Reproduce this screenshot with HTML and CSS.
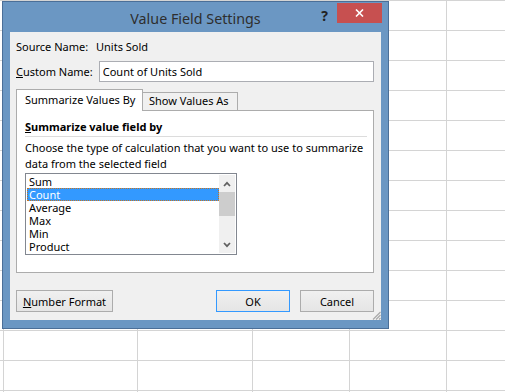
FILE: index.html
```html
<!DOCTYPE html>
<html lang="en">
<head>
    <meta charset="UTF-8">
    <title>Value Field Settings</title>
    <link rel="stylesheet" href="styles.css">
</head>
<body>
    <!-- worksheet behind the dialog -->
    <div class="sheet">
        <div class="col col-a"></div>
        <div class="col col-b"></div>
        <div class="col col-c"></div>
        <div class="col col-d"></div>
        <div class="col col-e"></div>
        <div class="col col-f"></div>
    </div>

    <div class="dialog">
        <div class="titlebar">
            <span class="title">Value Field Settings</span>
            <span class="help">?</span>
            <span class="close">
                <svg width="9" height="8" viewBox="0 0 9 8"><path d="M1 0.5 L8 7.5 M8 0.5 L1 7.5" stroke="#fff" stroke-width="1.6"/></svg>
            </span>
        </div>

        <div class="client">
            <div class="field-row">
                <span class="label source-label">Source Name:</span>
                <span>Units Sold</span>
            </div>
            <div class="field-row custom-row">
                <label class="label custom-label" for="custom-name"><u>C</u>ustom Name:</label>
                <input type="text" id="custom-name" class="text-input" value="Count of Units Sold">
            </div>

            <div class="tabs">
                <div class="tab active">Summarize Values By</div>
                <div class="tab">Show Values As</div>
            </div>
            <div class="panel">
                <div class="group-title"><u>S</u>ummarize value field by</div>
                <div class="rule"></div>
                <p class="desc">Choose the type of calculation that you want to use to summarize<br>data from the selected field</p>
                <div class="listbox">
                    <ul class="items">
                        <li>Sum</li>
                        <li class="selected">Count</li>
                        <li>Average</li>
                        <li>Max</li>
                        <li>Min</li>
                        <li>Product</li>
                    </ul>
                    <div class="scrollbar">
                        <div class="arrow">
                            <svg width="8" height="6" viewBox="0 0 8 6"><path d="M1 5 L4 1.8 L7 5" stroke="#606060" stroke-width="1.7" fill="none"/></svg>
                        </div>
                        <div class="thumb"></div>
                        <div class="track"></div>
                        <div class="arrow">
                            <svg width="8" height="6" viewBox="0 0 8 6"><path d="M1 1 L4 4.2 L7 1" stroke="#606060" stroke-width="1.7" fill="none"/></svg>
                        </div>
                    </div>
                </div>
            </div>

            <div class="buttons">
                <button class="btn btn-format"><u>N</u>umber Format</button>
                <button class="btn btn-ok">OK</button>
                <button class="btn btn-cancel">Cancel</button>
            </div>

            <svg class="grip" width="9" height="9" viewBox="0 0 9 9">
                <path d="M8.5 1 L1 8.5 M8.5 4 L4 8.5 M8.5 7 L7 8.5" stroke="#a8a8a8" stroke-width="1.2"/>
            </svg>
        </div>
    </div>
</body>
</html>
```

FILE: styles.css
```css
/* Base */
* {
    margin: 0;
    padding: 0;
    box-sizing: border-box;
}

body {
    width: 505px;
    height: 392px;
    overflow: hidden;
    position: relative;
    background: #fff;
    color: #000;
    font-family: 'Noto Sans', 'Open Sans', sans-serif;
    font-size: 11px;
}

/* Worksheet grid */
.sheet {
    display: flex;
    height: 392px;
    background-image: repeating-linear-gradient(to bottom, #d4d4d4 0, #d4d4d4 1px, transparent 1px, transparent 30px);
}

.col {
    border-right: 1px solid #d4d4d4;
}

.col-a { width: 4px; }
.col-b { width: 134px; }
.col-c { width: 115px; }
.col-d { width: 97px; }
.col-e { width: 97px; }
.col-f { flex: 1; border-right: none; }

/* Dialog window */
.dialog {
    position: absolute;
    left: 2px;
    top: 1px;
    width: 387px;
    height: 328px;
    background: #6b97c3;
    border: 1px solid #4b6f98;
}

.titlebar {
    height: 30px;
    position: relative;
    display: flex;
    align-items: center;
    justify-content: center;
    padding-top: 2px;
}

.title {
    font-size: 14.3px;
    color: #2e2e2e;
}

.help {
    position: absolute;
    right: 60px;
    top: 4px;
    font-weight: bold;
    font-size: 14px;
    color: #222;
}

.close {
    position: absolute;
    top: 1px;
    right: 6px;
    width: 45px;
    height: 20px;
    background: #c75050;
    display: flex;
    align-items: center;
    justify-content: center;
}

.client {
    position: relative;
    margin: 0 7px;
    height: 288px;
    background: #f0f0f0;
    padding: 7px 7px 0 6px;
    white-space: nowrap;
}

/* Name fields */
.field-row {
    display: flex;
    align-items: center;
    height: 16px;
    line-height: 16px;
}

.source-label { width: 80px; }
.custom-label { width: 83px; }

.custom-row {
    margin-top: 6px;
    height: 21px;
}

.text-input {
    width: 276px;
    height: 21px;
    border: 1px solid #abadb3;
    background: #fff;
    padding: 0 3px;
    font: inherit;
    color: #000;
    outline: none;
}

/* Tabs */
.tabs {
    display: flex;
    align-items: flex-end;
    height: 21px;
    margin-top: 7px;
}

.tab {
    height: 18px;
    line-height: 16px;
    padding-left: 6px;
    border: 1px solid #acacac;
    border-bottom: none;
    background: #f0f0f0;
    width: 96px;
    margin-left: -1px;
}

.tab.active {
    position: relative;
    z-index: 1;
    height: 22px;
    line-height: 20px;
    margin-bottom: -1px;
    margin-left: 0;
    width: 127px;
    padding-left: 8px;
    background: #fff;
}

.panel {
    width: 358px;
    height: 163px;
    border: 1px solid #acacac;
    background: #fff;
    padding: 8px 6px 0 8px;
}

.group-title {
    font-weight: bold;
    line-height: 16px;
}

.rule {
    height: 1px;
    background: #dcdcdc;
    margin-top: 1px;
}

.desc {
    margin-top: 3px;
    line-height: 16px;
}

/* List box */
.listbox {
    display: flex;
    width: 212px;
    height: 82px;
    margin-top: 1px;
    border: 1px solid #828790;
    padding: 1px;
    background: #fff;
}

.items {
    list-style: none;
    flex: 1;
}

.items li {
    height: 13px;
    line-height: 13px;
    padding-left: 2px;
}

.items li.selected {
    background: #3399ff;
    color: #fff;
    outline: 1px dotted #c8741e;
    outline-offset: -1px;
}

.scrollbar {
    width: 16px;
    background: #f0f0f0;
    display: flex;
    flex-direction: column;
}

.arrow {
    height: 17px;
    display: flex;
    align-items: center;
    justify-content: center;
}

.thumb {
    height: 24px;
    background: #cdcdcd;
}

.track {
    flex: 1;
}

/* Bottom buttons */
.buttons {
    display: flex;
    width: 358px;
    margin-top: 17px;
}

.btn {
    height: 22px;
    width: 74px;
    border: 1px solid #acacac;
    background: linear-gradient(#f0f0f0, #e5e5e5);
    font: inherit;
    color: #000;
}

.btn-format {
    width: 97px;
}

.btn-ok {
    margin-left: auto;
    border-color: #3399ff;
}

.btn-cancel {
    margin-left: 10px;
}

.grip {
    position: absolute;
    right: 0;
    bottom: 0;
}
```
